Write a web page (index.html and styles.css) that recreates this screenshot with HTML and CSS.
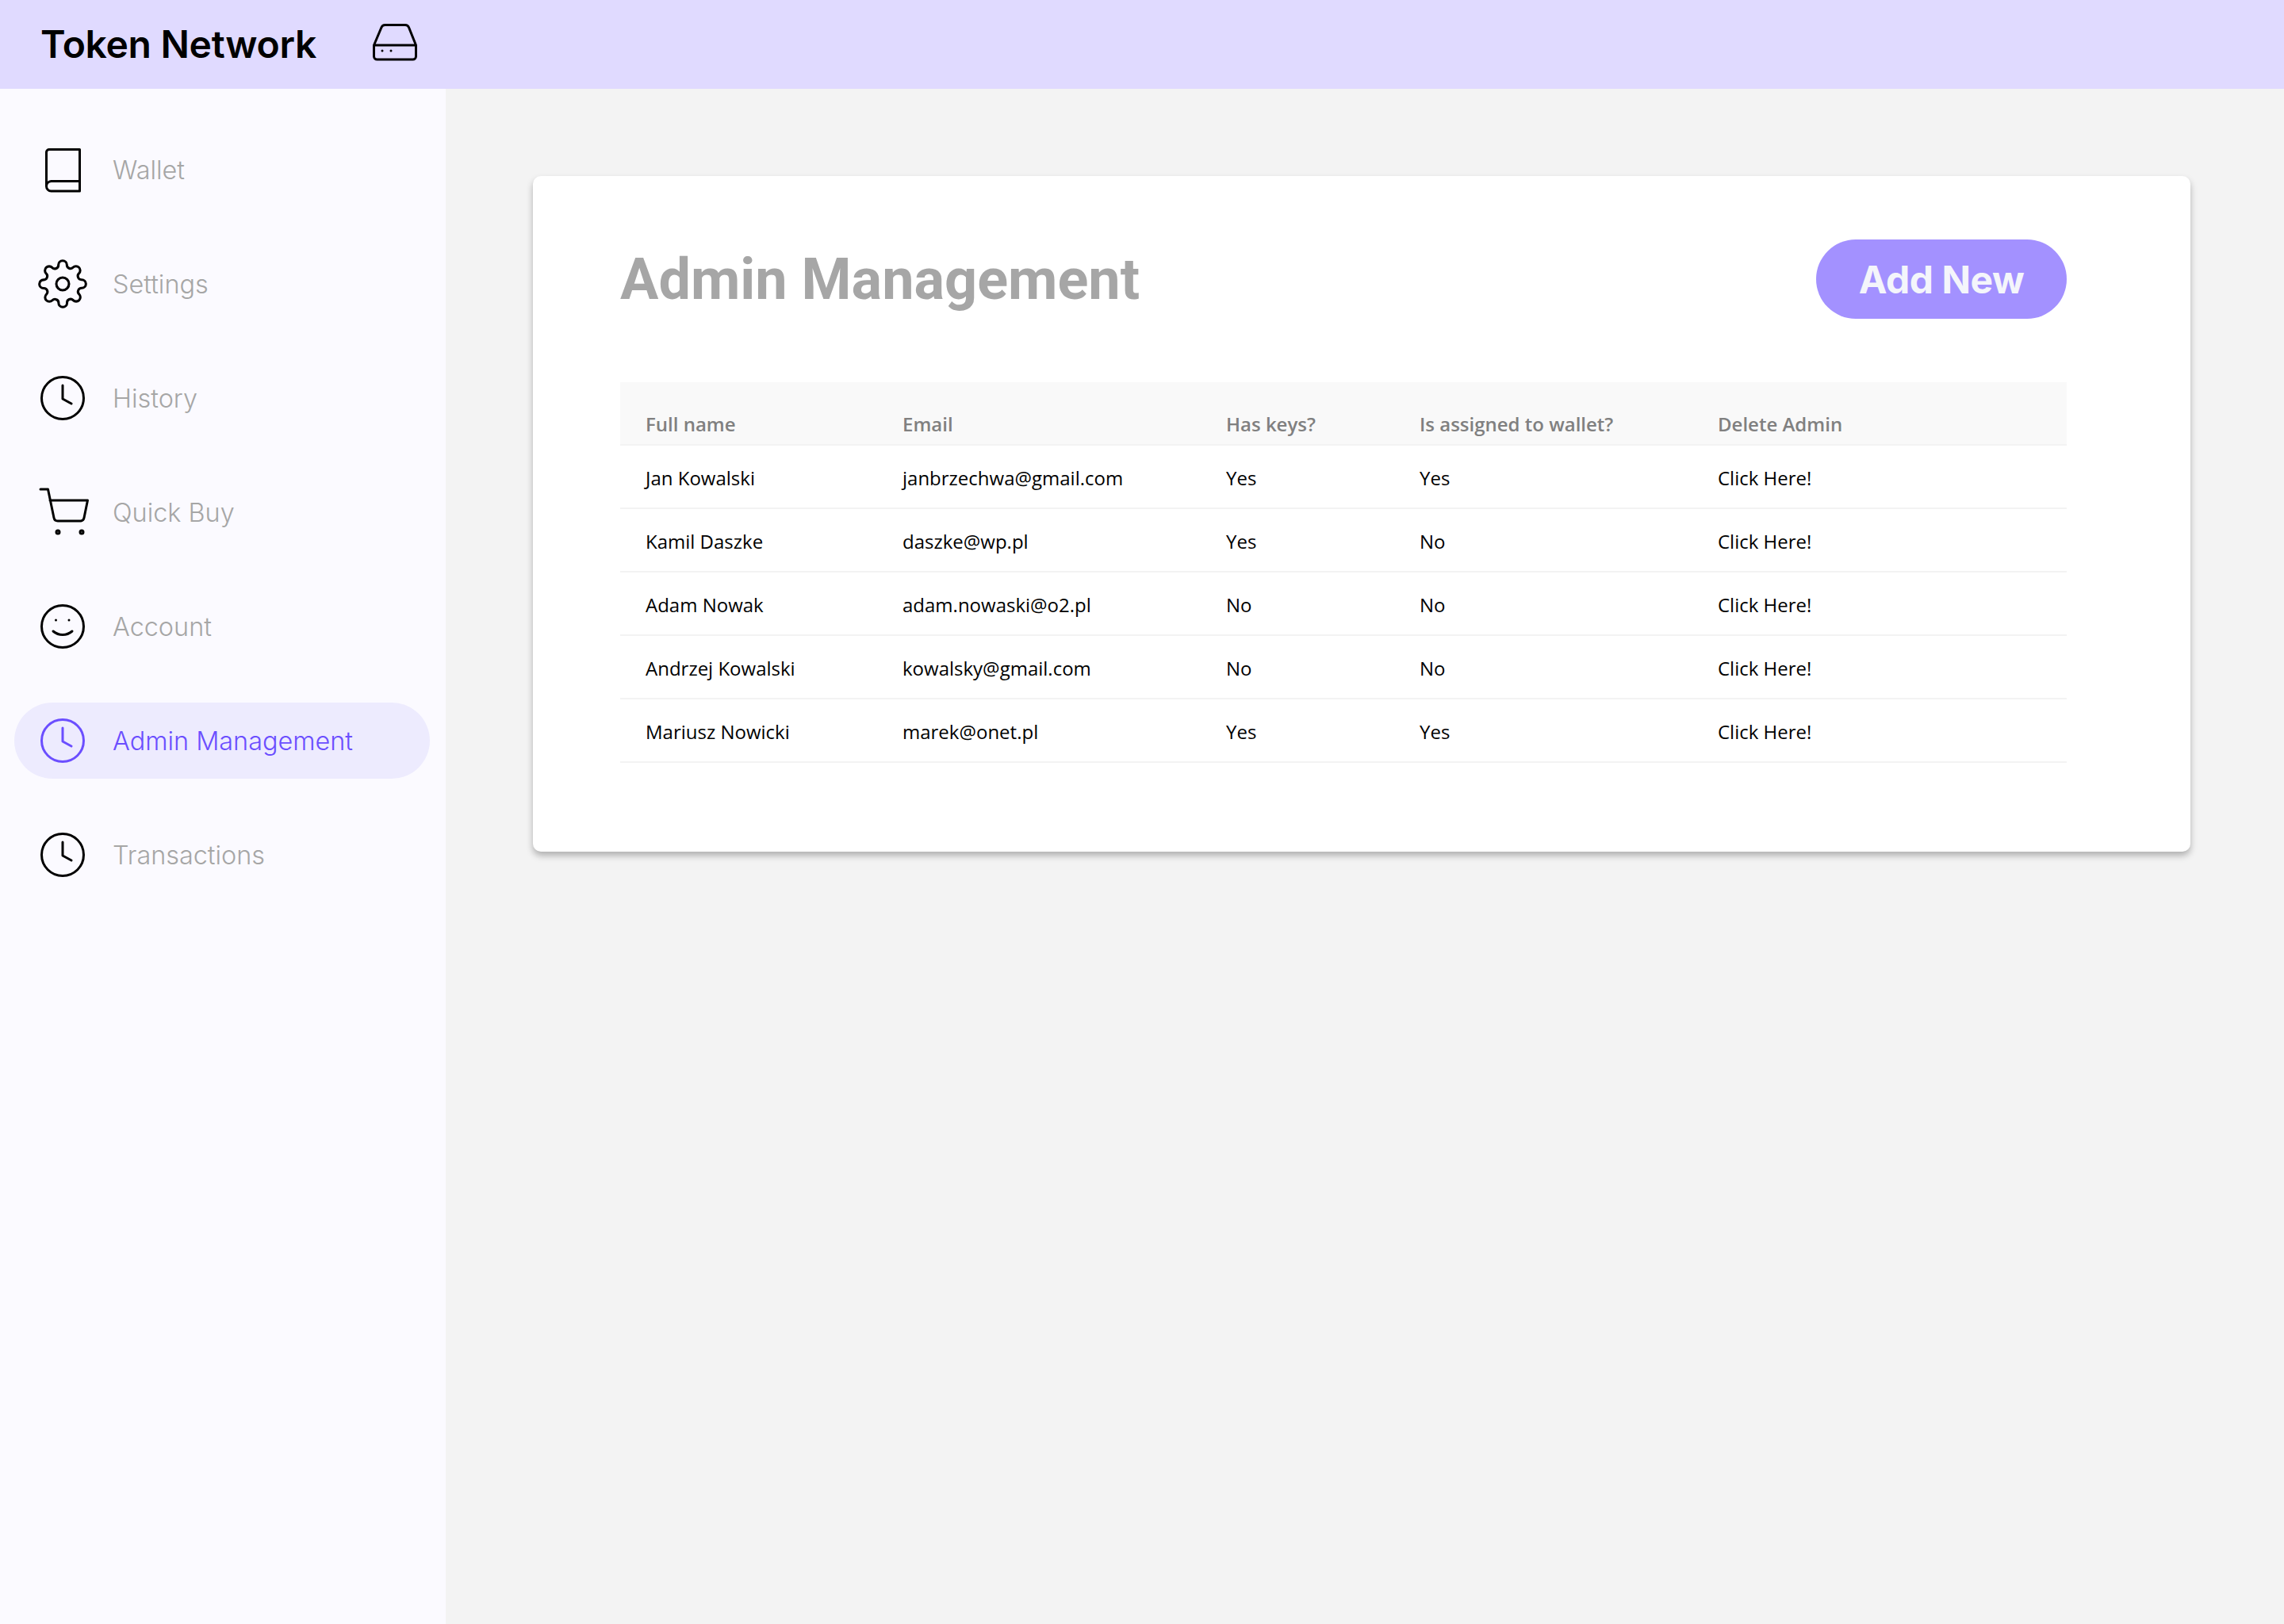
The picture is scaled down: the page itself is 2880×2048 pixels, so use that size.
FILE: index.html
```html
<!DOCTYPE html>
<html>

<head>
    <title>Token Network</title>
    <link rel="stylesheet" href="styles.css">
</head>

<body>
    <header class="topbar">
        <span class="logo">Token Network</span>
        <svg class="icon" viewBox="0 0 64 64">
            <path d="M5.500 33L15 10.500a5 5 0 0 1 4.500-3H45a5 5 0 0 1 4.500 3L58.500 33v14a4 4 0 0 1-4 4h-45a4 4 0 0 1-4-4zH58.500" />
            <circle class="dot" cx="16" cy="40" r="1.500" />
            <circle class="dot" cx="27" cy="40" r="1.500" />
        </svg>
    </header>

    <div class="layout">
        <nav class="sidebar">
            <a class="nav-item">
                <svg class="icon" viewBox="0 0 64 64">
                    <path d="M53.500 6.500H15a3.500 3.500 0 0 0-3.500 3.500v43a6 6 0 0 0 6 6h36zM11.500 53a6.500 6.500 0 0 1 6-6.500h36" />
                </svg>
                <span>Wallet</span>
            </a>
            <a class="nav-item">
                <svg class="icon" viewBox="0 0 24 24">
                    <g class="thin">
                        <circle cx="12" cy="12" r="3" />
                        <path d="M19.400 15a1.650 1.650 0 0 0 .33 1.820l.06.06a2 2 0 0 1 0 2.830 2 2 0 0 1-2.830 0l-.06-.06a1.650 1.650 0 0 0-1.820-.33 1.650 1.650 0 0 0-1 1.510V21a2 2 0 0 1-2 2 2 2 0 0 1-2-2v-.09A1.650 1.650 0 0 0 9 19.400a1.650 1.650 0 0 0-1.820.33l-.06.06a2 2 0 0 1-2.830 0 2 2 0 0 1 0-2.830l.06-.06a1.650 1.650 0 0 0 .33-1.820 1.650 1.650 0 0 0-1.510-1H3a2 2 0 0 1-2-2 2 2 0 0 1 2-2h.09A1.650 1.650 0 0 0 4.600 9a1.650 1.650 0 0 0-.33-1.820l-.06-.06a2 2 0 0 1 0-2.830 2 2 0 0 1 2.830 0l.06.06a1.650 1.650 0 0 0 1.820.33H9a1.650 1.650 0 0 0 1-1.510V3a2 2 0 0 1 2-2 2 2 0 0 1 2 2v.09a1.650 1.650 0 0 0 1 1.510 1.650 1.650 0 0 0 1.820-.33l.06-.06a2 2 0 0 1 2.830 0 2 2 0 0 1 0 2.830l-.06.06a1.650 1.650 0 0 0-.33 1.820V9a1.650 1.650 0 0 0 1.510 1H21a2 2 0 0 1 2 2 2 2 0 0 1-2 2h-.09a1.650 1.650 0 0 0-1.510 1z" />
                    </g>
                </svg>
                <span>Settings</span>
            </a>
            <a class="nav-item">
                <svg class="icon" viewBox="0 0 64 64">
                    <circle cx="32" cy="32" r="26.500" />
                    <path d="M32 16V33L43 39" />
                </svg>
                <span>History</span>
            </a>
            <a class="nav-item">
                <svg class="icon" viewBox="0 0 64 64">
                    <path d="M4 3H13.500L21 39a5 5 0 0 0 5 4H55a5 5 0 0 0 4-4L63.500 17H16" />
                    <circle cx="26" cy="57" r="2" />
                    <circle cx="56" cy="57" r="2" />
                </svg>
                <span>Quick Buy</span>
            </a>
            <a class="nav-item">
                <svg class="icon" viewBox="0 0 64 64">
                    <circle cx="32" cy="32" r="26.500" />
                    <path d="M20 38c7 6 17 6 24 0" />
                    <circle class="dot" cx="23.500" cy="24" r="1.500" />
                    <circle class="dot" cx="40" cy="24" r="1.500" />
                </svg>
                <span>Account</span>
            </a>
            <a class="nav-item active">
                <svg class="icon" viewBox="0 0 64 64">
                    <circle cx="32" cy="32" r="26.500" />
                    <path d="M32 16V33L43 39" />
                </svg>
                <span>Admin Management</span>
            </a>
            <a class="nav-item">
                <svg class="icon" viewBox="0 0 64 64">
                    <circle cx="32" cy="32" r="26.500" />
                    <path d="M32 16V33L43 39" />
                </svg>
                <span>Transactions</span>
            </a>
        </nav>

        <main class="content">
            <section class="card">
                <div class="card-top">
                    <h1>Admin Management</h1>
                    <button class="add-btn">Add New</button>
                </div>
                <table class="admins">
                    <thead>
                        <tr>
                            <th class="col-name">Full name</th>
                            <th class="col-email">Email</th>
                            <th class="col-keys">Has keys?</th>
                            <th class="col-wallet">Is assigned to wallet?</th>
                            <th>Delete Admin</th>
                        </tr>
                    </thead>
                    <tbody>
                        <tr>
                            <td>Jan Kowalski</td>
                            <td>janbrzechwa@gmail.com</td>
                            <td>Yes</td>
                            <td>Yes</td>
                            <td>Click Here!</td>
                        </tr>
                        <tr>
                            <td>Kamil Daszke</td>
                            <td>daszke@wp.pl</td>
                            <td>Yes</td>
                            <td>No</td>
                            <td>Click Here!</td>
                        </tr>
                        <tr>
                            <td>Adam Nowak</td>
                            <td>adam.nowaski@o2.pl</td>
                            <td>No</td>
                            <td>No</td>
                            <td>Click Here!</td>
                        </tr>
                        <tr>
                            <td>Andrzej Kowalski</td>
                            <td>kowalsky@gmail.com</td>
                            <td>No</td>
                            <td>No</td>
                            <td>Click Here!</td>
                        </tr>
                        <tr>
                            <td>Mariusz Nowicki</td>
                            <td>marek@onet.pl</td>
                            <td>Yes</td>
                            <td>Yes</td>
                            <td>Click Here!</td>
                        </tr>
                    </tbody>
                </table>
            </section>
        </main>
    </div>
</body>

</html>
```

FILE: styles.css
```css
:root {
    --background-color: #f3f3f3;
    --topbar-color: #e0daff;
    --sidebar-color: #fbfaff;
    --muted-color: #a6a6a6;
    --active-color: #6b4eff;
    --line-color: #f3f3f3;
}

* {
    box-sizing: border-box;
}

body {
    margin: 0;
    height: 100vh;
    display: flex;
    flex-direction: column;
    overflow: hidden;
    font-family: Inter, sans-serif;
    background-color: var(--background-color);
    color: #000;
}

.icon {
    width: 64px;
    height: 64px;
    flex: none;
    overflow: visible;
    fill: none;
    stroke: currentColor;
    stroke-width: 3;
    stroke-linecap: round;
    stroke-linejoin: round;
}

.icon .thin {
    stroke-width: 1.15;
}

.icon .dot {
    fill: currentColor;
    stroke: none;
}

.topbar {
    height: 112px;
    flex: none;
    display: flex;
    align-items: center;
    gap: 67px;
    padding-left: 51px;
    background-color: var(--topbar-color);
}

.logo {
    margin-bottom: 2px;
    font-size: 48px;
    font-weight: 600;
    letter-spacing: -0.3px;
}

.layout {
    flex: 1;
    display: flex;
}

.sidebar {
    width: 562px;
    flex: none;
    display: flex;
    flex-direction: column;
    gap: 48px;
    padding: 54px 20px 0 18px;
    background-color: var(--sidebar-color);
}

.nav-item {
    height: 96px;
    display: flex;
    align-items: center;
    gap: 31px;
    padding-left: 29px;
    border-radius: 48px;
    font-size: 32.400px;
    font-weight: 300;
    color: #000;
}

.nav-item span {
    margin-top: 1px;
    color: var(--muted-color);
}

.nav-item.active {
    background-color: #edebfe;
    color: var(--active-color);
}

.nav-item.active span {
    color: var(--active-color);
}

.content {
    flex: 1;
    padding: 110px 118px 0 110px;
}

.card {
    padding: 80px 156px 112px 110px;
    background-color: #fff;
    border-radius: 10px;
    box-shadow: 0 5px 8px rgba(0, 0, 0, 0.28);
}

.card-top {
    display: flex;
    align-items: center;
    justify-content: space-between;
    margin-bottom: 80px;
}

h1 {
    margin: 0;
    font-family: Roboto, sans-serif;
    font-size: 72px;
    font-weight: 700;
    color: var(--muted-color);
}

.add-btn {
    width: 316px;
    height: 100px;
    border: none;
    border-radius: 50px;
    background-color: #a391ff;
    color: #f4f5fb;
    font-family: Inter, sans-serif;
    font-size: 48px;
    font-weight: 700;
    letter-spacing: -0.5px;
}

.admins {
    width: 100%;
    table-layout: fixed;
    border-collapse: collapse;
    font-family: "Open Sans", sans-serif;
    font-size: 24px;
}

.admins th {
    height: 79px;
    padding: 26px 0 0 32px;
    text-align: left;
    font-weight: 600;
    color: #808080;
    background-color: #f9f9f9;
    border-bottom: 2px solid var(--line-color);
}

.admins td {
    height: 80px;
    padding: 3px 0 0 32px;
    border-bottom: 2px solid var(--line-color);
}

.col-name {
    width: 324px;
}

.col-email {
    width: 408px;
}

.col-keys {
    width: 244px;
}

.col-wallet {
    width: 376px;
}
```
